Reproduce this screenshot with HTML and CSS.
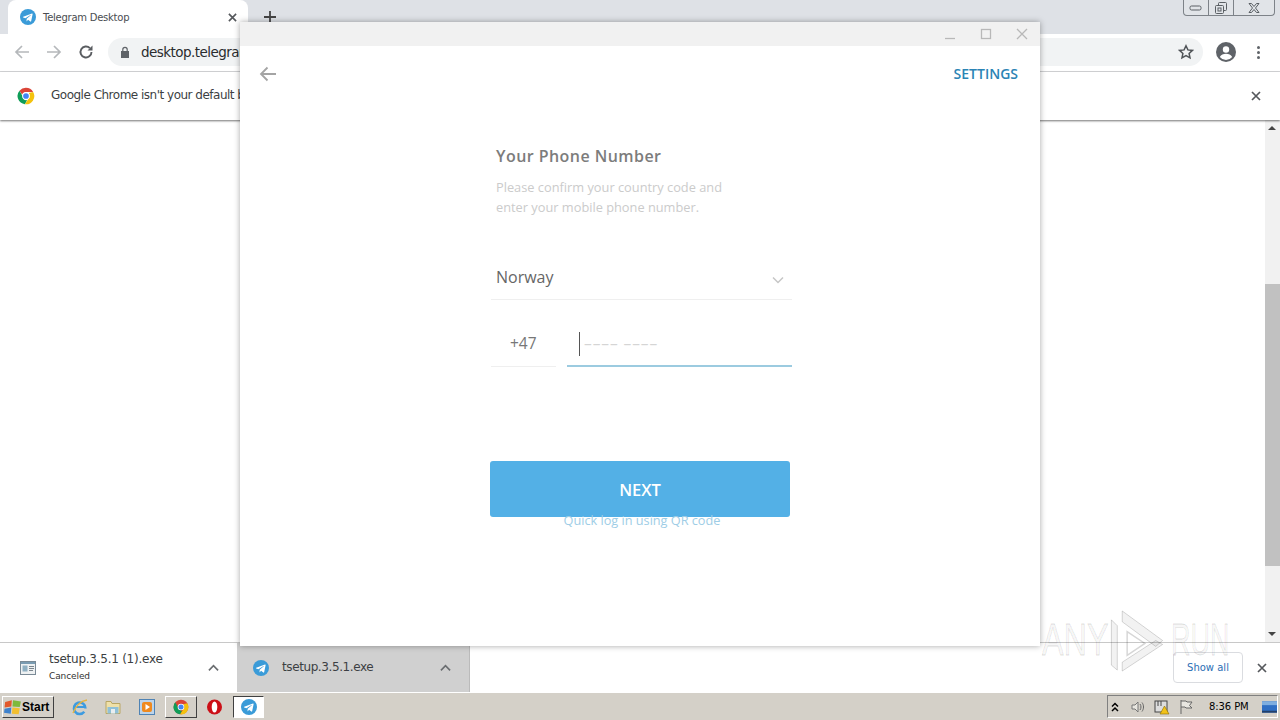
FILE: index.html
```html
<!DOCTYPE html>
<html lang="en">
<head>
<meta charset="utf-8">
<title>Telegram Desktop</title>
<link rel="stylesheet" href="styles.css">
</head>
<body>
<svg class="defs" width="0" height="0" aria-hidden="true">
  <symbol id="tg" viewBox="0 0 24 24">
    <circle cx="12" cy="12" r="12" fill="#3a9bd8"/>
    <path d="M4.8 11.8 18 6.7c.6-.2 1.100.2.900 1l-2.200 10.600c-.2.700-.6.900-1.200.500l-3.400-2.500-1.600 1.600c-.2.200-.4.300-.7.300l.2-3.400 6.200-5.600c.3-.2-.1-.4-.4-.2l-7.700 4.800-3.300-1c-.7-.2-.7-.7.000-1z" fill="#fff"/>
  </symbol>
</svg>

<div class="screen">
  <header class="tabstrip">
    <div class="tab">
      <svg class="tab-icon"><use href="#tg"/></svg>
      <span class="tab-title">Telegram Desktop</span>
      <svg class="tab-close" viewBox="0 0 10 10"><path d="M1 1l8 8M9 1l-8 8"/></svg>
    </div>
    <svg class="new-tab" viewBox="0 0 12 12"><path d="M6 0v12M0 6h12"/></svg>
    <div class="win-controls">
      <span class="win-btn"><svg viewBox="0 0 14 8" width="14" height="8"><rect x="1" y="2" width="11" height="4" rx="1.500"/></svg></span>
      <span class="win-btn"><svg viewBox="0 0 14 14" width="14" height="14"><rect x="4.500" y="1.500" width="8" height="8" rx="1"/><rect x="1.500" y="4.500" width="8" height="8" rx="1" class="fill"/><rect x="4" y="7" width="3" height="3"/></svg></span>
      <span class="win-btn wide"><svg viewBox="0 0 14 12" width="14" height="12"><path d="M2 1.500h2.500L7 4.500l2.500-3H12L8.500 6l3.500 4.500H9.500L7 7.500l-2.500 3H2L5.500 6z"/></svg></span>
    </div>
  </header>

  <nav class="toolbar">
    <svg class="nav-icon dim" viewBox="0 0 16 16"><path d="M15 8H2M8 2 2 8l6 6"/></svg>
    <svg class="nav-icon dim" viewBox="0 0 16 16"><path d="M1 8h13M8 2l6 6-6 6"/></svg>
    <svg class="nav-icon reload" viewBox="0 0 16 16"><path d="M13.500 8a5.500 5.500 0 1 1-1.600-3.900"/><path class="solid" d="M14.500 1.500v5h-5z"/></svg>
    <div class="omnibox">
      <svg class="lock" viewBox="0 0 10 12"><path d="M2.200 5V3.500a2.800 2.800 0 0 1 5.600 0V5H9v7H1V5zm1.200 0h3.200V3.500a1.600 1.600 0 0 0-3.200 0z"/></svg>
      <span class="url">desktop.telegram.org</span>
      <svg class="star" viewBox="0 0 16 16"><path d="m8 1.800 1.900 4.100 4.500.5-3.300 3 .9 4.400L8 11.600l-4 2.200.9-4.400-3.300-3 4.500-.5z"/></svg>
    </div>
    <svg class="avatar" viewBox="0 0 20 20"><circle cx="10" cy="10" r="10" fill="#5f6368"/><circle cx="10" cy="7.500" r="3.200" fill="#fff"/><path d="M3.800 15c1.300-2.300 3.500-3.200 6.200-3.200s4.900.9 6.200 3.200A8 8 0 0 1 10 18a8 8 0 0 1-6.200-3z" fill="#fff"/></svg>
    <div class="kebab"><i></i><i></i><i></i></div>
  </nav>

  <div class="infobar">
    <svg class="chrome-icon" viewBox="0 0 24 24">
      <path d="M12 1a11 11 0 0 1 9.500 5.500H12a5.500 5.500 0 0 0-5.200 3.700L3.300 5A11 11 0 0 1 12 1z" fill="#db4437"/>
      <path d="M3.300 5l4 7a5 5 0 0 0 6.300 5.300L10.500 23A11 11 0 0 1 3.300 5z" fill="#0f9d58"/>
      <path d="M21.500 6.500A11 11 0 0 1 10.500 23l4.500-7a5 5 0 0 0 0-8z" fill="#f4c20d"/>
      <circle cx="12" cy="12" r="5" fill="#fff"/><circle cx="12" cy="12" r="3.800" fill="#4285f4"/>
    </svg>
    <span class="info-text">Google Chrome isn't your default browser</span>
    <svg class="x-icon" viewBox="0 0 10 10"><path d="M1 1l8 8M9 1l-8 8"/></svg>
  </div>

  <main class="page">
    <div class="scrollbar">
      <span class="arrow up"></span>
      <div class="track"><div class="thumb"></div></div>
      <span class="arrow down"></span>
    </div>
  </main>

  <div class="downloads">
    <div class="dl-item">
      <svg class="exe-icon" viewBox="0 0 16 14"><rect x=".5" y=".5" width="15" height="13" fill="#eef1f2" stroke="#7a8a96"/><rect x="1" y="1" width="14" height="2" fill="#7a9cb2"/><rect x="2.500" y="4.500" width="5" height="6" fill="#8fb0c2"/><path d="M9 5.500h5M9 7.500h5M9 9.500h4" stroke="#7b858d"/></svg>
      <div class="dl-text">
        <span class="dl-name">tsetup.3.5.1 (1).exe</span>
        <span class="dl-status">Canceled</span>
      </div>
      <svg class="chev" viewBox="0 0 12 8"><path d="M1 6.500 6 1.500l5 5"/></svg>
    </div>
    <div class="dl-item active">
      <svg class="dl-tg"><use href="#tg"/></svg>
      <div class="dl-text"><span class="dl-name">tsetup.3.5.1.exe</span></div>
      <svg class="chev" viewBox="0 0 12 8"><path d="M1 6.500 6 1.500l5 5"/></svg>
    </div>
    <div class="dl-actions">
      <button class="show-all" type="button">Show all</button>
      <svg class="x-icon" viewBox="0 0 10 10"><path d="M1 1l8 8M9 1l-8 8"/></svg>
    </div>
  </div>

  <footer class="taskbar">
    <div class="start">
      <svg class="start-flag" viewBox="0 0 16 14"><path d="M1 2.500 7 1l-.5 5.500-6 1z" fill="#e2592c"/><path d="M8 1l7 1-1 5-6.500-.5z" fill="#7db93c"/><path d="M.5 8.500l6-1L6 13l-6-1z" fill="#3f82cc"/><path d="M7.500 7.500 14 8l-1 5.500-6-.5z" fill="#f2bf30"/></svg>
      <span>Start</span>
    </div>
    <div class="quick">
      <svg viewBox="0 0 18 18"><path d="M14.500 10.500a5.800 5.800 0 1 0-1.200 3.300" fill="none" stroke="#3d9be0" stroke-width="2.500"/><path d="M4 9h10" stroke="#3d9be0" stroke-width="2"/><path d="M2 15C5 7 10 3 16 2" fill="none" stroke="#e8b43c" stroke-width="1.300"/></svg>
      <svg viewBox="0 0 18 18"><path d="M2 3.500h5l1 2h8v10H2z" fill="#efe0a8" stroke="#b9a664"/><rect x="3.500" y="9" width="11" height="6.500" fill="#8fc0d8"/><rect x="7" y="11" width="4" height="4.500" fill="#e9eef0"/></svg>
      <svg class="media" viewBox="0 0 18 18"><rect x="1.500" y="1.500" width="15" height="15" fill="#bcd4ea" stroke="#4f83b4"/><rect x="4" y="4" width="10" height="10" rx="2" fill="#ef8a1f"/><path d="M7.500 6v6l4.500-3z" fill="#fff"/></svg>
      <span class="task-btn raised">
        <svg viewBox="0 0 24 24"><circle cx="12" cy="12" r="11" fill="#db4437"/><path d="M21.500 6.500A11 11 0 0 1 10.500 23l4.500-7a5 5 0 0 0 0-8z" fill="#f4c20d"/><path d="M3.300 5l4 7a5 5 0 0 0 6.300 5.300L10.500 23A11 11 0 0 1 3.300 5z" fill="#0f9d58"/><circle cx="12" cy="12" r="5" fill="#fff"/><circle cx="12" cy="12" r="3.800" fill="#4285f4"/></svg>
      </span>
      <svg class="opera" viewBox="0 0 18 18"><circle cx="8.500" cy="9" r="7.500" fill="#cc0f16"/><ellipse cx="8.500" cy="9" rx="2.800" ry="5.500" fill="#fff"/></svg>
      <span class="task-btn pressed"><svg><use href="#tg"/></svg></span>
    </div>
    <div class="tray">
      <svg class="tray-up" viewBox="0 0 10 12"><path d="M2 5.500 5 2.500l3 3M2 10 5 7l3 3"/></svg>
      <svg viewBox="0 0 16 16"><path d="M2 6h3l3-3v10l-3-3H2z" fill="#e8e6e0" stroke="#777"/><path d="M10 5c1.300 1.800 1.300 4.200 0 6M12 3.500c2 2.700 2 6.300 0 9" fill="none" stroke="#666"/></svg>
      <svg viewBox="0 0 16 16"><rect x="1" y="2" width="12" height="11" fill="#ddd" stroke="#444"/><path d="M4 2v5M7 2v5" stroke="#444"/><path d="M10.500 7 15 15H6z" fill="#f2c218" stroke="#8a6d00" stroke-width=".6"/></svg>
      <svg viewBox="0 0 16 16"><path d="M3 1v14M3 2h5l1 1h5l-2.500 3.500L14 9H8L7 8H3" fill="#e8e6e0" stroke="#666"/></svg>
      <span class="clock">8:36 PM</span>
      <svg class="desk" viewBox="0 0 16 14"><rect width="16" height="12" y="1" fill="#2f6fc4"/><rect y="1" width="16" height="4" fill="#7eaee0"/><rect y="11" width="16" height="2" fill="#23406a"/></svg>
    </div>
  </footer>

  <section class="tg-window">
    <div class="tg-title">
      <svg class="tg-ctl" viewBox="0 0 12 12"><path d="M1 10.500h10"/></svg>
      <svg class="tg-ctl" viewBox="0 0 12 12"><rect x="1.500" y="1.500" width="9" height="9"/></svg>
      <svg class="tg-ctl" viewBox="0 0 12 12"><path d="M1 1l10 10M11 1 1 11"/></svg>
    </div>
    <div class="tg-top">
      <svg class="tg-back" viewBox="0 0 18 16"><path d="M17 8H2M8.500 1.500 2 8l6.500 6.500"/></svg>
      <span class="tg-settings">SETTINGS</span>
    </div>
    <div class="tg-form">
      <h1 class="tg-heading">Your Phone Number</h1>
      <p class="tg-desc">Please confirm your country code and<br>enter your mobile phone number.</p>
      <div class="country">
        <span>Norway</span>
        <svg class="country-chev" viewBox="0 0 12 8"><path d="M1 1.500l5 5 5-5"/></svg>
      </div>
      <div class="phone">
        <div class="code">+47</div>
        <div class="number"><i class="caret"></i><span class="mask">–––– ––––</span></div>
      </div>
      <button class="next" type="button">NEXT</button>
      <a class="qr">Quick log in using QR code</a>
    </div>
  </section>

  <div class="watermark" aria-hidden="true">
    <span class="wm-text">ANY</span>
    <svg class="wm-logo" viewBox="0 0 58 68"><path d="M3 12v46l6 5V18zM14 3l41 30-7 6L14 14z" fill="#000" fill-opacity=".05" stroke="#000" stroke-opacity=".16"/><path d="M14 64l41-27-7-4-34 22z" fill="#000" fill-opacity=".05" stroke="#000" stroke-opacity=".16"/><path d="M19 24v24l18-12z" fill="none" stroke="#000" stroke-opacity=".16" stroke-width="1.500"/></svg>
    <span class="wm-text run">RUN</span>
  </div>
</div>
</body>
</html>
```
FILE: styles.css
```css
* { box-sizing: border-box; }
html, body { margin: 0; padding: 0; }
body { font-family: "Liberation Sans", Arial, sans-serif; background: #fff; overflow: hidden; }
.defs { position: absolute; }
.screen { position: relative; width: 1280px; height: 720px; display: flex; flex-direction: column; overflow: hidden; }

/* tab strip */
.tabstrip { height: 34px; background: #dee1e6; display: flex; align-items: flex-start; padding-left: 8px; flex: none; }
.tab { width: 240px; height: 34px; background: #fff; border-radius: 8px 8px 0 0; display: flex; align-items: center; padding: 0 11px 0 12px; }
.tab-icon { width: 16px; height: 16px; flex: none; }
.tab-title { font: 10px "DejaVu Sans", sans-serif; letter-spacing: -.25px; color: #4a4d51; margin-left: 7px; flex: 1; white-space: nowrap; }
.tab-close { width: 9px; height: 9px; fill: none; stroke: #55585c; stroke-width: 1.800; }
.new-tab { width: 12px; height: 12px; margin: 11px 0 0 16px; fill: none; stroke: #444; stroke-width: 1.800; }
.win-controls { margin-left: auto; margin-right: 5px; height: 16px; width: 92px; display: flex; border: 1px solid #7d8288; border-top: 0; border-radius: 0 0 4px 4px; background: #e1e4e8; }
.win-btn { width: 25px; display: flex; align-items: center; justify-content: center; border-right: 1px solid #7d8288; }
.win-btn.wide { flex: 1; border-right: 0; }
.win-btn svg { fill: none; stroke: #5a5f64; }
.win-btn .fill { fill: #e1e4e8; }

/* toolbar */
.toolbar { height: 38px; background: #fff; border-bottom: 1px solid #d6d7d9; display: flex; align-items: center; padding: 0 14px 1px 14px; flex: none; }
.nav-icon { width: 16px; height: 16px; margin-right: 16px; fill: none; stroke-width: 1.700; }
.nav-icon.dim { stroke: #b5b8bb; }
.nav-icon.reload { stroke: #5a5d61; stroke-width: 1.900; margin-right: 14px; }
.reload .solid { fill: #5a5d61; stroke: none; }
.omnibox { width: 1095px; height: 28px; border-radius: 14px; background: #f1f3f4; display: flex; align-items: center; padding: 0 9px 0 12px; margin-right: 13px; flex: none; }
.lock { width: 10px; height: 12px; fill: #5f6368; flex: none; }
.url { font: 13.500px "DejaVu Sans", sans-serif; letter-spacing: -.55px; color: #2a2c2e; margin-left: 11px; flex: 1; }
.star { width: 16px; height: 16px; fill: none; stroke: #505458; stroke-width: 1.500; }
.avatar { width: 20px; height: 20px; flex: none; }
.kebab { display: flex; flex-direction: column; gap: 2px; margin-left: 21px; }
.kebab i { width: 3px; height: 3px; border-radius: 50%; background: #5f6368; }

/* infobar */
.infobar { height: 48px; background: #fff; display: flex; align-items: center; padding: 0 19px 0 17px; box-shadow: 0 1px 2px rgba(0,0,0,.55); position: relative; flex: none; }
.chrome-icon { width: 18px; height: 18px; }
.info-text { font: 12px "DejaVu Sans", sans-serif; letter-spacing: -.5px; color: #3c3f43; margin: 0 0 2px 16px; flex: 1; }
.x-icon { width: 10px; height: 10px; fill: none; stroke: #55585c; stroke-width: 1.700; }

/* page area */
.page { flex: 1; background: #fff; display: flex; justify-content: flex-end; min-height: 0; border-bottom: 1px solid #c8c8c8; }
.scrollbar { width: 15px; background: #f1f1f1; display: flex; flex-direction: column; }
.arrow { height: 17px; position: relative; flex: none; }
.arrow::after { content: ""; position: absolute; left: 3px; border: 4px solid transparent; }
.arrow.up::after { top: 6px; border-top: 0; border-bottom: 4px solid #444; }
.arrow.down::after { top: 7px; border-bottom: 0; border-top: 4px solid #444; }
.track { flex: 1; padding-top: 147px; }
.thumb { height: 282px; background: #c1c1c1; }

/* downloads */
.downloads { height: 49px; background: #fff; display: flex; flex: none; }
.dl-item { width: 237px; display: flex; align-items: center; padding: 0 18px 0 20px; }
.dl-item.active { width: 233px; background: #d0d0d0; border-right: 1px solid #bbb; padding-left: 16px; }
.active .dl-name { letter-spacing: -.4px; }
.exe-icon { width: 16px; height: 14px; flex: none; }
.dl-tg { width: 16px; height: 16px; flex: none; }
.dl-text { flex: 1; display: flex; flex-direction: column; margin: 0 0 2px 13px; gap: 5px; }
.dl-name { font: 12px "DejaVu Sans", sans-serif; letter-spacing: -.25px; color: #3c3f43; }
.dl-status { font: 9px "DejaVu Sans", sans-serif; letter-spacing: -.1px; color: #333; }
.chev { width: 11px; height: 8px; fill: none; stroke: #6a6d70; stroke-width: 1.800; }
.dl-actions { margin-left: auto; display: flex; align-items: center; padding-right: 13px; }
.show-all { width: 70px; height: 31px; background: #fff; border: 1px solid #dadce0; border-radius: 4px; font: 10px "DejaVu Sans", sans-serif; color: #2c6fb5; padding: 0; margin-right: 14px; }

/* taskbar */
.taskbar { height: 28px; background: #d4d0c8; border-top: 1px solid #fff; display: flex; align-items: center; padding: 0 2px; flex: none; }
.start { width: 52px; height: 22px; display: flex; align-items: center; gap: 0; padding-left: 1px; font: bold 12px "Liberation Sans", sans-serif; color: #000; background: #d4d0c8; border: 1px solid; border-color: #fff #404040 #404040 #fff; }
.start-flag { width: 18px; height: 16px; flex: none; }
.quick { display: flex; align-items: center; margin-left: 17px; gap: 15px; }
.quick > svg { width: 18px; height: 18px; flex: none; }
.quick > .media { margin-left: 1px; }
.task-btn { width: 32px; height: 22px; display: flex; align-items: center; justify-content: center; border: 1px solid; margin: 0 -6px; }
.task-btn svg { width: 16px; height: 16px; }
.task-btn.raised { border-color: #fff #404040 #404040 #fff; }
.task-btn.pressed { width: 31px; background: #fff; border-color: #404040 #fff #fff #404040; }
.tray { margin-left: auto; width: 171px; height: 23px; border: 1px solid; border-color: #808080 #fff #fff #808080; display: flex; align-items: center; gap: 8px; padding-left: 2px; }
.tray svg { width: 16px; height: 16px; flex: none; }
.tray .tray-up { width: 10px; height: 12px; fill: none; stroke: #000; stroke-width: 1.500; margin-right: 2px; }
.clock { font: 10px "DejaVu Sans", sans-serif; letter-spacing: -.1px; color: #000; margin-left: 7px; white-space: nowrap; }
.tray .desk { margin-left: auto; width: 15px; }

/* telegram window */
.tg-window { position: absolute; left: 240px; top: 22px; width: 800px; height: 624px; background: #fff; box-shadow: 0 0 6px rgba(0,0,0,.35); display: flex; flex-direction: column; }
.tg-title { height: 24px; background: #f1f1f1; display: flex; justify-content: flex-end; align-items: center; gap: 24px; padding-right: 12px; flex: none; }
.tg-ctl { width: 12px; height: 12px; fill: none; stroke: #b8b8b8; stroke-width: 1.300; }
.tg-top { display: flex; justify-content: space-between; align-items: center; padding: 18px 22px 0 19px; flex: none; }
.tg-back { width: 18px; height: 16px; fill: none; stroke: #a4a4a4; stroke-width: 1.800; }
.tg-settings { font: 600 14px "Open Sans", sans-serif; color: #2b84b5; }
.tg-form { width: 302px; margin-left: 250px; padding-top: 62px; display: flex; flex-direction: column; }
.tg-heading { margin: 0 0 0 6px; font: 600 16px/22px "Open Sans", sans-serif; letter-spacing: .45px; color: #7c7c7c; }
.tg-desc { margin: 10px 0 0 6px; font: 12.800px/20px "Open Sans", sans-serif; color: #cbcbcb; }
.country { height: 67px; margin: 16px 0 0 1px; display: flex; align-items: center; justify-content: space-between; padding: 21px 8px 0 5px; border-bottom: 1px solid #efefef; font: 16px "Open Sans", sans-serif; color: #666; }
.country-chev { width: 12px; height: 8px; fill: none; stroke: #c6c6c6; stroke-width: 1.500; margin-top: 6px; }
.phone { display: flex; margin: 0 0 0 1px; height: 67px; gap: 11px; }
.code { width: 65px; border-bottom: 1px solid #efefef; padding: 31px 0 0 19px; font: 15.500px/24px "Open Sans", sans-serif; color: #777; }
.number { flex: 1; border-bottom: 2px solid #9ccbe0; display: flex; align-items: flex-start; padding: 31px 0 0 12px; }
.caret { width: 1px; height: 24px; background: #555; flex: none; margin-top: 1px; }
.mask { font: 15.500px/24px "Open Sans", sans-serif; color: #d5d5d5; margin-left: 4px; letter-spacing: .9px; white-space: nowrap; }
.next { width: 300px; height: 56px; margin-top: 94px; background: #53b0e6; border: 0; border-radius: 3px; font: 600 16.500px "Open Sans", sans-serif; color: #fff; padding: 0; }
.qr { margin-top: -5px; text-align: center; font: 12.700px/16px "Open Sans", sans-serif; color: #9ecde6; margin-left: 2px; }

/* watermark */
.watermark { position: absolute; left: 1042px; top: 608px; display: flex; align-items: center; pointer-events: none; height: 67px; }
.wm-text { width: 63px; font: 45px "Liberation Sans", sans-serif; color: rgba(0,0,0,.04); -webkit-text-stroke: .8px rgba(0,0,0,.14); transform: scaleX(.72); transform-origin: left center; margin-top: -4px; white-space: nowrap; }
.wm-logo { width: 58px; height: 67px; margin-left: 3px; flex: none; }
.wm-text.run { width: 57px; margin-left: 5px; transform: scaleX(.6); }
```
